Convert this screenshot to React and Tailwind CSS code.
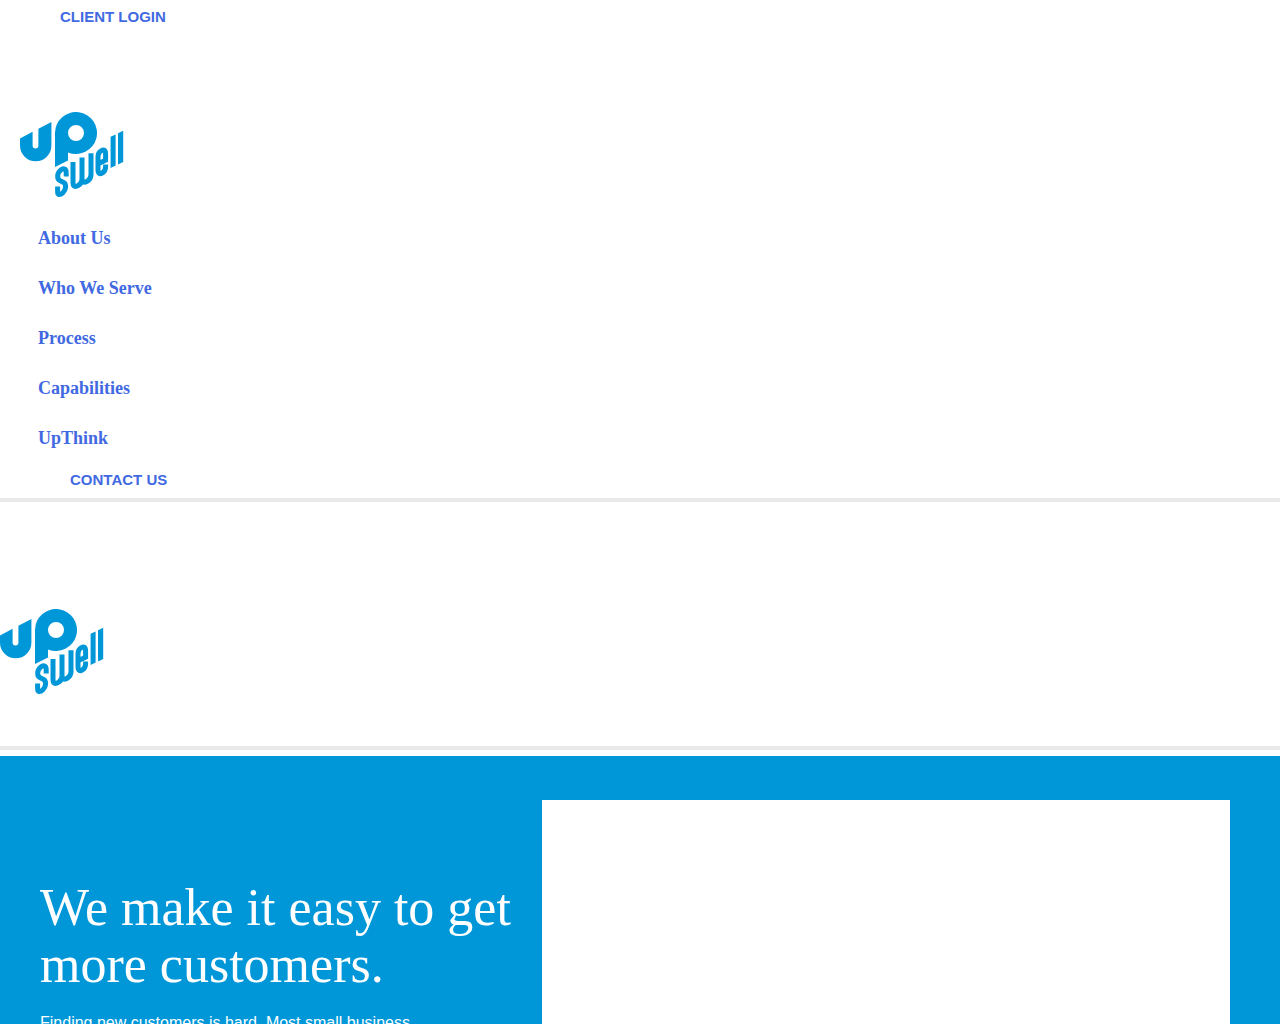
/* eslint-disable react/prop-types */
const navItems = [
  { id: "about", label: "About Us" },
  { id: "serve", label: "Who We Serve" },
  { id: "process", label: "Process" },
  { id: "capabilities", label: "Capabilities" },
  { id: "upthink", label: "UpThink" },
];

const Logo = () => (
  <svg
    viewBox="0 0 104 86"
    className="block w-[104px] h-[86px]"
    role="img"
    aria-label="Upswell"
  >
    <g className="fill-[#0097d9]">
      <path d="M0 26.5 12.6 19.8V33.5a2.9 2.9 0 0 0 5.8 0V16.8L31.4 10V33.6A15.7 15.7 0 0 1 0 33.6Z" />
      <path
        fillRule="evenodd"
        d="M35 55V21A21 21 0 1 1 48 40.4V48.6ZM56 13a8 8 0 1 0 0 16a8 8 0 0 0 0-16Z"
      />
      <path d="M90.6 24.8 95.6 22.4V53.6L90.6 56ZM98 21.3 103.2 18.8V50L98 52.4Z" />
    </g>
    <g className="fill-none stroke-[#0097d9] stroke-[5]">
      <path d="M46.2 64.5V60.5C46.2 56 43 56 40.6 58.2C37 61 36.8 66.5 39.6 68.4L43.6 70.4C46.8 72.5 46 78 42.8 80.8C39.6 83.6 37.6 83 37.6 79.5V74.5" />
      <path d="M53 50V70.5C53 75.5 56 74.8 58.4 73.3C61 71.8 62 70 62 67V45.6M62 66.5C62 71.3 65 70.4 67.2 69.2C70 67.6 71 65.8 71 62.8V41.3" />
      <path d="M78.2 51.8 85.6 48.2V42C85.6 37.6 83.6 37.4 81.4 38.6C79 39.9 78 41.8 78 44.8V57.5C78 62 80 62.2 82.2 61C84.6 59.7 85.6 57.8 85.6 54.8V52.4" />
    </g>
  </svg>
);

const ButtonLink = ({ href, className = "", children }) => (
  <a
    href={href}
    className={`block w-fit font-['Liberation_Sans',Arial,sans-serif] text-[15px] leading-[17px] font-bold uppercase text-[#4169e1] ${className}`}
  >
    {children}
  </a>
);

const Header = () => (
  <header className="border-b-4 border-[#e9e9e9]">
    <ButtonLink href="#login" className="mx-[60px] pt-2">
      Client Login
    </ButtonLink>
    <a href="#home" className="block w-fit ml-5 mt-[87px]">
      <Logo />
    </a>
    <nav className="mt-[15px]">
      <ul>
        {navItems.map((item) => (
          <li key={item.id} className="px-[38px]">
            <a
              href={`#${item.id}`}
              className="font-['Liberation_Serif','Times_New_Roman',serif] text-[18px] leading-[50px] font-bold text-[#4169e1]"
            >
              {item.label}
            </a>
          </li>
        ))}
      </ul>
    </nav>
    <ButtonLink href="#contact" className="mx-[70px] pt-2 pb-[10px]">
      Contact Us
    </ButtonLink>
  </header>
);

const StickyHeader = () => (
  <div className="border-b-4 border-[#e9e9e9] pt-[107px] pb-[51px]">
    <a href="#home" className="block w-fit">
      <Logo />
    </a>
  </div>
);

const Hero = () => (
  <section className="mt-[6px] grid grid-cols-[7fr_10fr] gap-5 bg-[#0097d9] pt-11 pl-10 pr-[50px] text-white">
    <div className="pt-[79px]">
      <h1 className="font-['Liberation_Serif','Times_New_Roman',serif] text-[52px] leading-[57px]">
        We make it easy to get more customers.
      </h1>
      <p className="mt-[18px] font-['Liberation_Sans',Arial,sans-serif] text-base">
        Finding new customers is hard. Most small business
      </p>
    </div>
    <div className="bg-white" />
  </section>
);

const App = () => (
  <div className="bg-white">
    <Header />
    <StickyHeader />
    <Hero />
  </div>
);

export default App;
